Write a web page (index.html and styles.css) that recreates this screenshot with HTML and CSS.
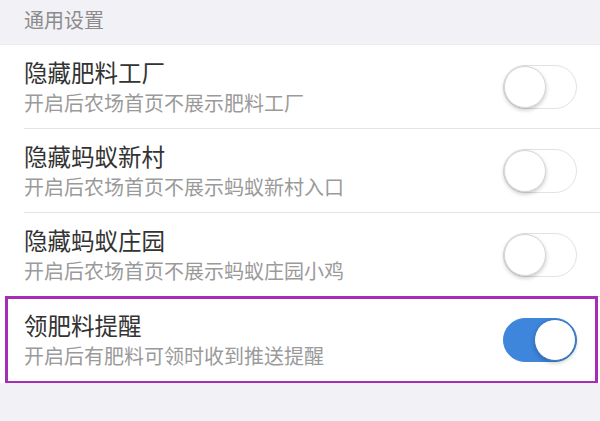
FILE: index.html
```html
<!DOCTYPE html>
<html lang="zh-CN">
<head>
  <meta charset="UTF-8">
  <meta name="viewport" content="width=device-width, initial-scale=1.0">
  <title>通用设置</title>
  <link rel="stylesheet" href="styles.css">
</head>
<body>
  <div class="section_title">通用设置</div>

  <div class="list">
    <div class="row">
      <div class="text">
        <div class="title">隐藏肥料工厂</div>
        <div class="desc">开启后农场首页不展示肥料工厂</div>
      </div>
      <span class="switch"><span class="knob"></span></span>
    </div>
    <div class="row">
      <div class="text">
        <div class="title">隐藏蚂蚁新村</div>
        <div class="desc">开启后农场首页不展示蚂蚁新村入口</div>
      </div>
      <span class="switch"><span class="knob"></span></span>
    </div>
    <div class="row">
      <div class="text">
        <div class="title">隐藏蚂蚁庄园</div>
        <div class="desc">开启后农场首页不展示蚂蚁庄园小鸡</div>
      </div>
      <span class="switch"><span class="knob"></span></span>
    </div>
    <div class="row marked">
      <div class="text">
        <div class="title">领肥料提醒</div>
        <div class="desc">开启后有肥料可领时收到推送提醒</div>
      </div>
      <span class="switch on"><span class="knob"></span></span>
    </div>
  </div>
</body>
</html>
```

FILE: styles.css
```css
* {
  box-sizing: border-box;
}

body {
  margin: 0;
  background: #f2f2f6;
  font-family: "Noto Sans CJK SC", "Noto Sans", sans-serif;
}

.section_title {
  height: 45px;
  padding-left: 24px;
  line-height: 40px;
  font-size: 20px;
  color: #8c8c8c;
  border-bottom: 1px solid #ececef;
}

.list {
  background: #fff;
}

.row {
  position: relative;
  display: flex;
  align-items: center;
  height: 84px;
  margin-left: 24px;
  padding-right: 23px;
  border-bottom: 1px solid #e4e4e6;
}

.row:last-child {
  height: 86px;
  border-bottom: none;
}

.text {
  flex: 1;
}

.title {
  font-size: 23.5px;
  line-height: 32px;
  color: #333;
}

.desc {
  font-size: 20px;
  line-height: 30px;
  color: #9a9a9a;
}

/* highlight box drawn over the last row */
.row.marked::after {
  content: "";
  position: absolute;
  left: -19px;
  right: 2px;
  top: -1px;
  bottom: -1px;
  border: 3px solid #a62db6;
}

.switch {
  display: flex;
  align-items: center;
  width: 74px;
  height: 44px;
  border-radius: 22px;
  border: 1.5px solid #e2e2e2;
  background: #fff;
}

.switch .knob {
  width: 42px;
  height: 42px;
  border-radius: 50%;
  background: #fff;
  border: 1px solid #d6d6d6;
  box-shadow: 0 2px 4px rgba(0, 0, 0, .22);
}

.switch.on {
  justify-content: flex-end;
  background: #3d86db;
  border-color: #3d86db;
}

.switch.on .knob {
  border-color: #3576c2;
}
```
